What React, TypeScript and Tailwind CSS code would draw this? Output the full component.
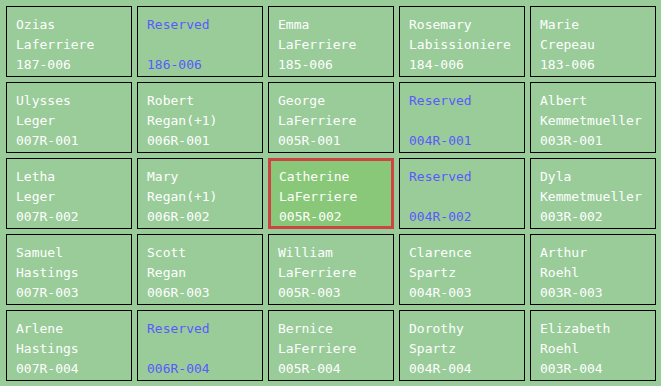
import React from 'react';

type Seat = {
  first?: string;
  last?: string;
  code: string;
  reserved?: boolean;
  selected?: boolean;
};

const rows: Seat[][] = [
  [
    { first: 'Ozias', last: 'Laferriere', code: '187-006' },
    { code: '186-006', reserved: true },
    { first: 'Emma', last: 'LaFerriere', code: '185-006' },
    { first: 'Rosemary', last: 'Labissioniere', code: '184-006' },
    { first: 'Marie', last: 'Crepeau', code: '183-006' },
  ],
  [
    { first: 'Ulysses', last: 'Leger', code: '007R-001' },
    { first: 'Robert', last: 'Regan(+1)', code: '006R-001' },
    { first: 'George', last: 'LaFerriere', code: '005R-001' },
    { code: '004R-001', reserved: true },
    { first: 'Albert', last: 'Kemmetmueller', code: '003R-001' },
  ],
  [
    { first: 'Letha', last: 'Leger', code: '007R-002' },
    { first: 'Mary', last: 'Regan(+1)', code: '006R-002' },
    { first: 'Catherine', last: 'LaFerriere', code: '005R-002', selected: true },
    { code: '004R-002', reserved: true },
    { first: 'Dyla', last: 'Kemmetmueller', code: '003R-002' },
  ],
  [
    { first: 'Samuel', last: 'Hastings', code: '007R-003' },
    { first: 'Scott', last: 'Regan', code: '006R-003' },
    { first: 'William', last: 'LaFerriere', code: '005R-003' },
    { first: 'Clarence', last: 'Spartz', code: '004R-003' },
    { first: 'Arthur', last: 'Roehl', code: '003R-003' },
  ],
  [
    { first: 'Arlene', last: 'Hastings', code: '007R-004' },
    { code: '006R-004', reserved: true },
    { first: 'Bernice', last: 'LaFerriere', code: '005R-004' },
    { first: 'Dorothy', last: 'Spartz', code: '004R-004' },
    { first: 'Elizabeth', last: 'Roehl', code: '003R-004' },
  ],
];

const SeatCell = ({ seat }: { seat: Seat }) => {
  const box = seat.selected
    ? 'border-[3px] border-[#cc4444] bg-[#88c878] pl-[8px] pt-[6px]'
    : 'border border-black pl-[9px] pt-[8px]';
  const color = seat.reserved ? 'text-[#5a5aff]' : 'text-white';

  return (
    <div className={`h-[71px] ${box} ${color} whitespace-pre`}>
      <div>{seat.reserved ? 'Reserved' : seat.first}</div>
      <div>{seat.reserved ? ' ' : seat.last}</div>
      <div>{seat.code}</div>
    </div>
  );
};

const App = () => {
  return (
    <div
      className="w-[661px] h-[386px] bg-[#99cc99] pl-[6px] pt-[6px] text-[13px] leading-[20px] overflow-hidden"
      style={{ fontFamily: '"DejaVu Sans Mono", "Liberation Mono", monospace' }}
    >
      <div className="grid grid-cols-[repeat(5,126px)] gap-[5px]">
        {rows.flat().map((seat) => (
          <SeatCell key={seat.code} seat={seat} />
        ))}
      </div>
    </div>
  );
};

export default App;
